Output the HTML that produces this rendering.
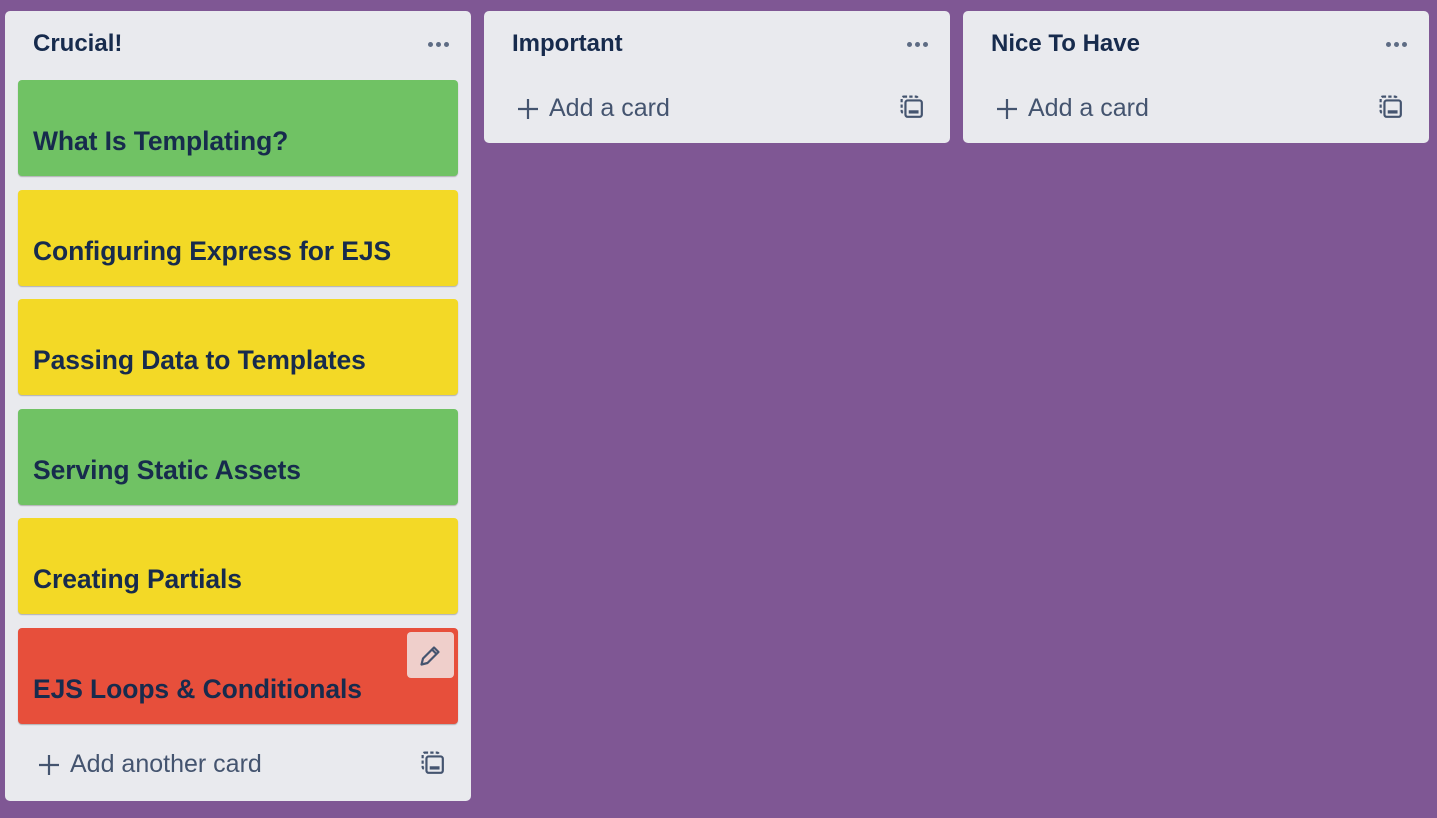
<!DOCTYPE html>
<html><head><meta charset="utf-8"><style>
*{margin:0;padding:0;box-sizing:border-box}
body{width:1437px;height:818px;background:#7f5794;font-family:"Liberation Sans",sans-serif;position:relative;overflow:hidden;color:#172b4d}
.list{position:absolute;top:11px;width:466px;background:#e9eaee;border-radius:5px}
.title{position:absolute;left:28px;top:19px;font-size:24px;font-weight:bold;color:#172b4d}
.dots{position:absolute;right:22px;top:31px;display:flex;gap:3px}
.dots i{width:5px;height:5px;border-radius:50%;background:#5e6c84;display:block}
.card{position:absolute;left:13px;width:440px;height:96px;border-radius:4px;box-shadow:0 1px 1px rgba(0,0,0,.25)}
.card span{position:absolute;left:15px;top:46px;font-size:26.5px;font-weight:bold;color:#172b4d;letter-spacing:-0.1px}
.g{background:#70c264}.y{background:#f3d926}.r{background:#e74f3b}
.add{position:absolute;font-size:25px;color:#44546f;display:flex;align-items:center}
.add svg{margin-right:10px}
.tpl{position:absolute}
</style></head><body>
<div class="list" style="left:5px;height:790px">
<div class="title">Crucial!</div>
<div class="dots"><i></i><i></i><i></i></div>
<div class="card g" style="top:69px"><span>What Is Templating?</span></div>
<div class="card y" style="top:179px"><span>Configuring Express for EJS</span></div>
<div class="card y" style="top:288px"><span>Passing Data to Templates</span></div>
<div class="card g" style="top:398px"><span>Serving Static Assets</span></div>
<div class="card y" style="top:507px"><span>Creating Partials</span></div>
<div class="card r" style="top:617px"><span>EJS Loops &amp; Conditionals</span>
<div style="position:absolute;right:4px;top:4px;width:47px;height:46px;background:#efcfcb;border-radius:4px">
<svg width="47" height="46" viewBox="0 0 47 46"><path d="M14.5 32.5l1.5-6 11-11 4.5 4.5-11 11z M25 17.5l4.5 4.5" fill="none" stroke="#44546f" stroke-width="2.2" stroke-linejoin="round"/></svg></div></div>
<div class="add" style="left:33px;top:739px"><svg width="22" height="22" viewBox="0 0 22 22"><path d="M11 1v20M1 11h20" stroke="#44546f" stroke-width="2.2"/></svg>Add another card</div>
<svg class="tpl" style="left:416px;top:740px" width="24" height="24" viewBox="0 0 22 22"><rect x="1.5" y="1.5" width="15" height="15" rx="2" fill="none" stroke="#44546f" stroke-width="2" stroke-dasharray="3 2"/><rect x="5" y="5" width="15" height="15" rx="2" fill="#e9eaee" stroke="#44546f" stroke-width="2"/><rect x="8" y="14" width="9" height="3" fill="#44546f"/></svg>
</div>
<div class="list" style="left:484px;height:132px">
<div class="title">Important</div>
<div class="dots"><i></i><i></i><i></i></div>
<div class="add" style="left:33px;top:83px"><svg width="22" height="22" viewBox="0 0 22 22"><path d="M11 1v20M1 11h20" stroke="#44546f" stroke-width="2.2"/></svg>Add a card</div>
<svg class="tpl" style="left:416px;top:84px" width="24" height="24" viewBox="0 0 22 22"><rect x="1.5" y="1.5" width="15" height="15" rx="2" fill="none" stroke="#44546f" stroke-width="2" stroke-dasharray="3 2"/><rect x="5" y="5" width="15" height="15" rx="2" fill="#e9eaee" stroke="#44546f" stroke-width="2"/><rect x="8" y="14" width="9" height="3" fill="#44546f"/></svg>
</div>
<div class="list" style="left:963px;height:132px">
<div class="title">Nice To Have</div>
<div class="dots"><i></i><i></i><i></i></div>
<div class="add" style="left:33px;top:83px"><svg width="22" height="22" viewBox="0 0 22 22"><path d="M11 1v20M1 11h20" stroke="#44546f" stroke-width="2.2"/></svg>Add a card</div>
<svg class="tpl" style="left:416px;top:84px" width="24" height="24" viewBox="0 0 22 22"><rect x="1.5" y="1.5" width="15" height="15" rx="2" fill="none" stroke="#44546f" stroke-width="2" stroke-dasharray="3 2"/><rect x="5" y="5" width="15" height="15" rx="2" fill="#e9eaee" stroke="#44546f" stroke-width="2"/><rect x="8" y="14" width="9" height="3" fill="#44546f"/></svg>
</div>
</body></html>
